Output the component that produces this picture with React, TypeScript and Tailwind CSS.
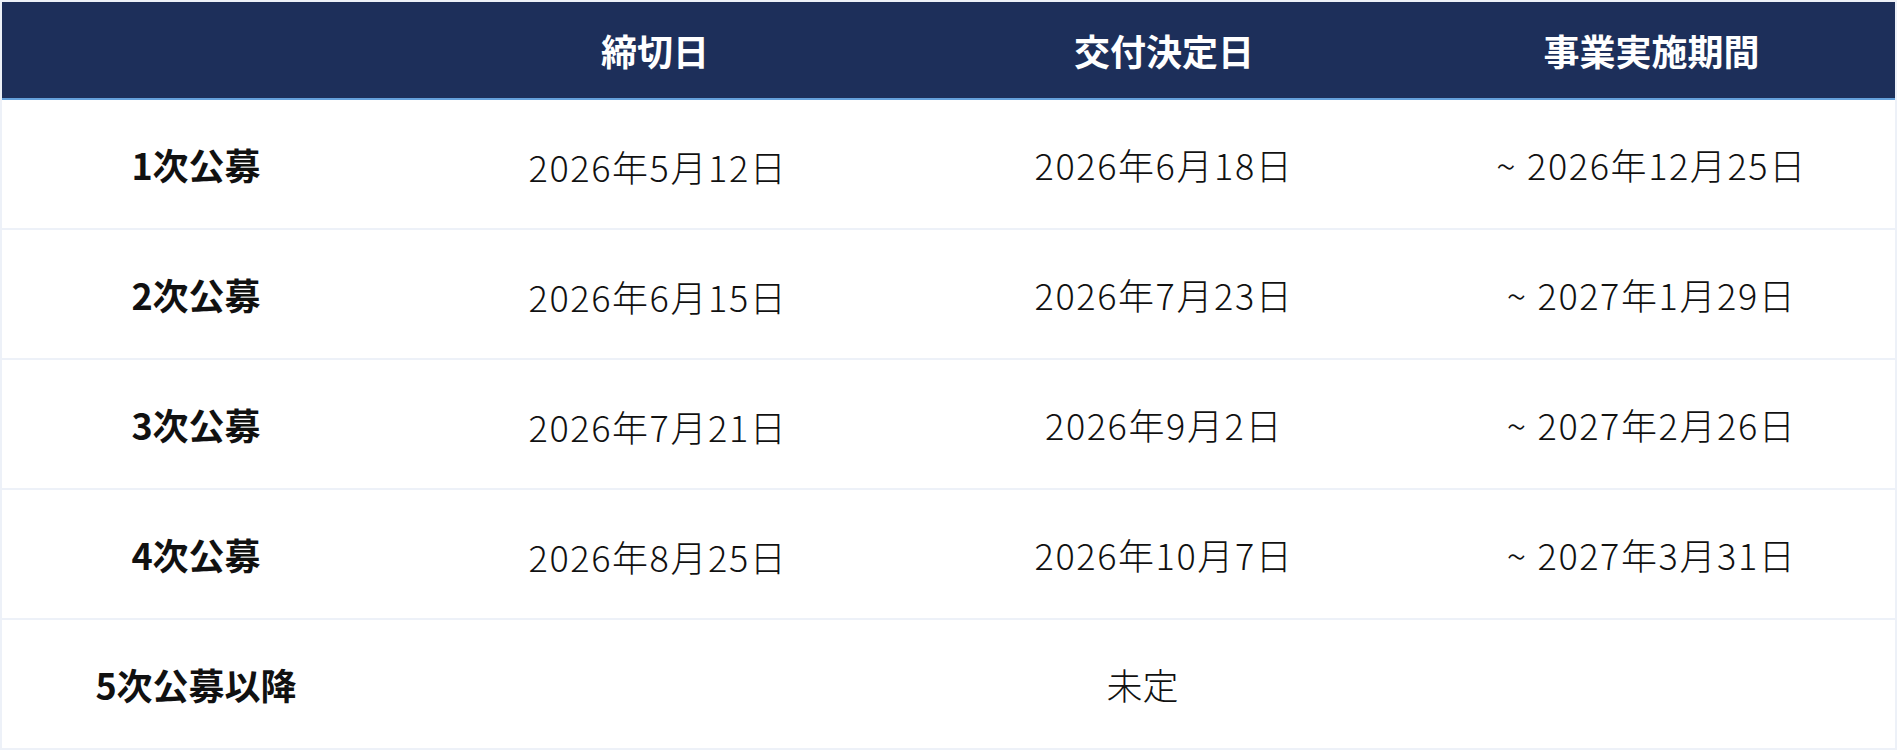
const rows = [
  { name: "1次公募", deadline: "2026年5月12日", decision: "2026年6月18日", period: "2026年12月25日" },
  { name: "2次公募", deadline: "2026年6月15日", decision: "2026年7月23日", period: "2027年1月29日" },
  { name: "3次公募", deadline: "2026年7月21日", decision: "2026年9月2日", period: "2027年2月26日" },
  { name: "4次公募", deadline: "2026年8月25日", decision: "2026年10月7日", period: "2027年3月31日" },
];

const cols = "grid grid-cols-[388px_530px_488px_487px]";
const font = { fontFamily: '"Noto Sans CJK JP", "Noto Sans", sans-serif' };

export default function App() {
  return (
    <div className="bg-white w-[1899px] h-[753px]" style={font}>
      <div className="w-[1897px] border-2 border-[#edf1f8] bg-white">
        {/* header */}
        <div className={`${cols} h-[98px] bg-[#1d2f5a] border-b-2 border-[#65a1db] text-white text-[36px] font-bold`}>
          <div />
          <div className="flex items-center justify-center">締切日</div>
          <div className="flex items-center justify-center">交付決定日</div>
          <div className="flex items-center justify-center">事業実施期間</div>
        </div>

        {rows.map((r) => (
          <div key={r.name} className={`${cols} h-[130px] border-b-2 border-[#edf1f8] text-[#111] text-[36px]`}>
            <div className="flex items-center justify-center font-bold">{r.name}</div>
            <div className="flex items-center justify-center pt-[4px] pl-[6px] font-light tracking-[1.6px]">{r.deadline}</div>
            <div className="flex items-center justify-center font-light tracking-[1.6px]">{r.decision}</div>
            <div className="flex items-center justify-center font-light tracking-[1.6px]">
              <span className="mr-[10px]">~</span>
              {r.period}
            </div>
          </div>
        ))}

        {/* row 5: undecided */}
        <div className="grid grid-cols-[388px_1505px] h-[128px] text-[#111] text-[36px]">
          <div className="flex items-center justify-center font-bold">5次公募以降</div>
          <div className="flex items-center justify-center font-light">未定</div>
        </div>
      </div>
    </div>
  );
}
